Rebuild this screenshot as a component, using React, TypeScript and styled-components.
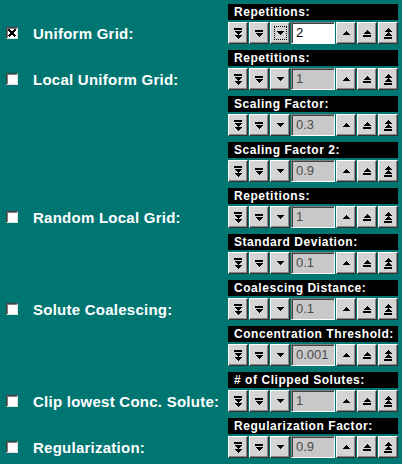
import React from 'react';
import styled, { createGlobalStyle } from 'styled-components';

const Global = createGlobalStyle`
  html, body { margin: 0; padding: 0; background: #007673; }
  body { width: 402px; height: 464px; overflow: hidden; font-family: "Liberation Sans", Arial, sans-serif; }
`;

const Page = styled.div`
  width: 402px;
  height: 464px;
  overflow: hidden;
  background: #007673;
  box-sizing: border-box;
  padding-top: 4px;
  display: flex;
  flex-direction: column;
  gap: 6px;
`;

const Section = styled.div`
  display: grid;
  grid-template-columns: 228px auto;
`;

const Option = styled.label`
  display: flex;
  align-items: center;
  height: 22px;
  margin-top: 18px;
  padding-left: 6px;
  gap: 15px;
  color: #fff;
  font-weight: bold;
  font-size: 15px;
  letter-spacing: 0.25px;
  white-space: nowrap;
`;

const Check = styled.span`
  width: 12px;
  height: 12px;
  box-sizing: border-box;
  background: #fff;
  border: 1px solid;
  border-color: #404040 #e0e0e0 #e0e0e0 #404040;
  box-shadow: inset 1px 1px #808080;
  display: flex;
  align-items: center;
  justify-content: center;
`;

const Groups = styled.div`
  display: flex;
  flex-direction: column;
  gap: 6px;
`;

const Group = styled.div`
  display: flex;
  flex-direction: column;
  gap: 2px;
`;

const Title = styled.div`
  background: #000;
  color: #fff;
  font-weight: bold;
  font-size: 12px;
  letter-spacing: 0.55px;
  height: 16px;
  line-height: 16px;
  padding-left: 6px;
  box-sizing: border-box;
  white-space: nowrap;
  width: max-content;
  min-width: 170px;
`;

const Row = styled.div`
  display: flex;
  gap: 1px;
  width: 170px;
`;

const Btn = styled.div`
  width: 20px;
  height: 22px;
  box-sizing: border-box;
  background: #d4d4d4;
  border: 1px solid;
  border-color: #fff #303030 #303030 #fff;
  box-shadow: inset -1px -1px #888;
  display: flex;
  align-items: center;
  justify-content: center;
`;

const Focus = styled.span`
  display: flex;
  align-items: center;
  justify-content: center;
  width: 13px;
  height: 14px;
  box-sizing: border-box;
  border: 1px dotted #000;
`;

const Field = styled.div<{ $active: boolean }>`
  width: 44px;
  height: 22px;
  box-sizing: border-box;
  border: 1px solid;
  border-color: #808080 #fff #fff #808080;
  box-shadow: inset 1px 1px #404040;
  background: ${p => (p.$active ? '#fff' : '#c8c8c8')};
  color: ${p => (p.$active ? '#000' : '#4c4c4c')};
  font-size: 13px;
  line-height: 20px;
  padding-left: 4px;
`;

type Kind = 'd3' | 'd2' | 'd1' | 'u1' | 'u2' | 'u3';

const Arrow: React.FC<{ kind: Kind }> = ({ kind }) => {
  const w = kind === 'd1' || kind === 'u1' ? 7 : 8;
  const down = (y: number, h: number) => `0,${y} ${w},${y} ${w / 2},${y + h}`;
  const up = (y: number, h: number) => `0,${y + h} ${w},${y + h} ${w / 2},${y}`;
  let shapes: React.ReactNode[] = [];
  let height = 11;
  if (kind === 'd1') {
    height = 4;
    shapes = [<polygon key="a" points={down(0, 4)} />];
  } else if (kind === 'd2') {
    height = 7;
    shapes = [<rect key="b" x={0} y={0} width={w} height={2} />, <polygon key="a" points={down(3, 4)} />];
  } else if (kind === 'd3') {
    height = 11;
    shapes = [
      <rect key="b" x={0} y={0} width={w} height={2} />,
      <polygon key="a" points={down(3, 4)} />,
      <polygon key="c" points={down(7, 4)} />,
    ];
  } else if (kind === 'u1') {
    height = 4;
    shapes = [<polygon key="a" points={up(0, 4)} />];
  } else if (kind === 'u2') {
    height = 7;
    shapes = [<polygon key="a" points={up(0, 4)} />, <rect key="b" x={0} y={5} width={w} height={2} />];
  } else {
    height = 11;
    shapes = [
      <polygon key="a" points={up(0, 4)} />,
      <polygon key="c" points={up(4, 4)} />,
      <rect key="b" x={0} y={9} width={w} height={2} />,
    ];
  }
  return (
    <svg width={w} height={height} viewBox={`0 0 ${w} ${height}`} fill="#000" shapeRendering="crispEdges">
      {shapes}
    </svg>
  );
};

const CrossMark = () => (
  <svg width={8} height={8} viewBox="0 0 8 8" stroke="#000" strokeWidth={2} shapeRendering="crispEdges">
    <line x1={0.5} y1={0.5} x2={7.5} y2={7.5} />
    <line x1={7.5} y1={0.5} x2={0.5} y2={7.5} />
  </svg>
);

type GroupData = { title: string; value: string; active?: boolean };
type SectionData = { label: string; checked?: boolean; groups: GroupData[] };

const sections: SectionData[] = [
  { label: 'Uniform Grid:', checked: true, groups: [{ title: 'Repetitions:', value: '2', active: true }] },
  {
    label: 'Local Uniform Grid:',
    groups: [
      { title: 'Repetitions:', value: '1' },
      { title: 'Scaling Factor:', value: '0.3' },
      { title: 'Scaling Factor 2:', value: '0.9' },
    ],
  },
  {
    label: 'Random Local Grid:',
    groups: [
      { title: 'Repetitions:', value: '1' },
      { title: 'Standard Deviation:', value: '0.1' },
    ],
  },
  {
    label: 'Solute Coalescing:',
    groups: [
      { title: 'Coalescing Distance:', value: '0.1' },
      { title: 'Concentration Threshold:', value: '0.001' },
    ],
  },
  { label: 'Clip lowest Conc. Solute:', groups: [{ title: '# of Clipped Solutes:', value: '1' }] },
  { label: 'Regularization:', groups: [{ title: 'Regularization Factor:', value: '0.9' }] },
];

const Spin: React.FC<{ g: GroupData }> = ({ g }) => (
  <Group>
    <Title>{g.title}</Title>
    <Row>
      <Btn><Arrow kind="d3" /></Btn>
      <Btn><Arrow kind="d2" /></Btn>
      <Btn>
        {g.active ? (
          <Focus><Arrow kind="d1" /></Focus>
        ) : (
          <Arrow kind="d1" />
        )}
      </Btn>
      <Field $active={!!g.active}>{g.value}</Field>
      <Btn><Arrow kind="u1" /></Btn>
      <Btn><Arrow kind="u2" /></Btn>
      <Btn><Arrow kind="u3" /></Btn>
    </Row>
  </Group>
);

export default function App() {
  return (
    <>
      <Global />
      <Page>
        {sections.map(s => (
          <Section key={s.label}>
            <div>
              <Option>
                <Check>{s.checked && <CrossMark />}</Check>
                {s.label}
              </Option>
            </div>
            <Groups>
              {s.groups.map(g => (
                <Spin key={g.title + g.value} g={g} />
              ))}
            </Groups>
          </Section>
        ))}
      </Page>
    </>
  );
}
